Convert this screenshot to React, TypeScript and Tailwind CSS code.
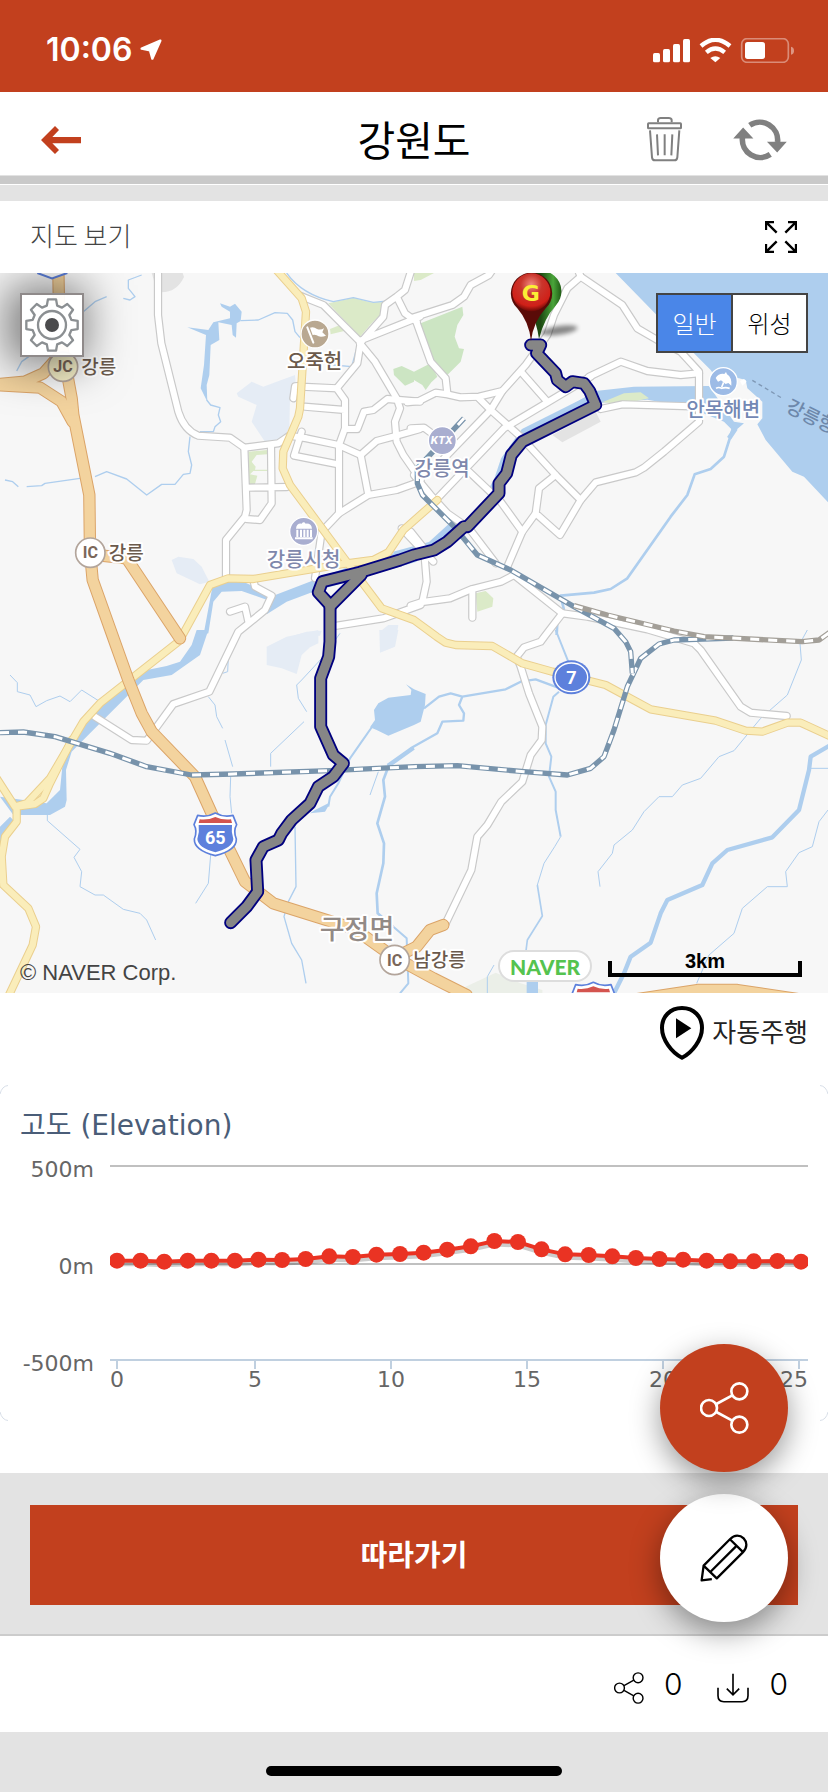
import React from "react";

type Quad = "nw" | "ne" | "sw" | "se";
type Line = [Quad, string];

// The map drawing is kept as four sheets that share one 2484x2160 canvas.
const SHEET: Record<Quad, string> = {
  nw: "translate(0 -24)",
  ne: "translate(1242 -24)",
  sw: "translate(0 1071)",
  se: "translate(1242 1071)",
};

const KR = "font-['Noto_Sans_CJK_KR',sans-serif]";

const areas: [Quad, string, string][] = [
  ["nw", "#e3e3e3", "M390 24 L455 24 L475 90 L485 82 Q530 82 552 36 L548 24Z"],
  ["nw", "#e5ecf5", "M710 385 L755 350 L790 365 L830 350 L885 330 L890 385 L870 400 L868 490 L850 520 L795 530 L755 470 L770 420 L715 395Z"],
  ["nw", "#e5ecf5", "M515 885 L535 875 L580 882 L605 905 L628 950 L600 958 L530 925Z"],
  ["nw", "#e5ecf5", "M880 1112 L920 1100 L965 1097 L960 1112Z M1140 1100 L1165 1080 L1195 1080 L1190 1112 L1140 1112Z"],
  ["sw", "#e5ecf5", "M800 50 L860 20 L955 0 L955 40 L930 52 L905 75 L890 132 L845 115 L800 105Z"],
  ["sw", "#e5ecf5", "M1138 0 L1195 0 L1185 50 L1140 68Z"],
  ["nw", "#dbeac8", "M985 115 L1060 98 L1110 112 L1148 112 L1140 150 L1110 180 L1080 215Z M990 192 L1020 180 L1045 195 L992 208Z"],
  ["nw", "#dbeac8", "M745 560 L802 555 V568 L770 570 L755 590 L767 605 L765 614 L802 614 V618 H760 L750 628 L772 632 L765 657 L748 657Z"],
  ["nw", "#cce5c3", "M1180 312 L1205 303 L1242 320 L1242 350 L1215 362 L1182 330Z"],
  ["ne", "#cce5c3", "M20 175 L145 125 L148 150 L130 180 L122 215 L135 250 L150 252 L140 290 L100 330 L75 320 L48 285Z"],
  ["ne", "#cce5c3", "M0 320 L50 295 L70 335 L52 352 L35 375 L25 360 L0 345Z"],
  ["ne", "#dbeac8", "M185 985 L215 978 L238 1000 L235 1025 L190 1040Z M0 24 L60 24 L20 45 L0 48Z"],
  ["se", "#ebefe8", "M155 1070 L245 1028 L320 1060 L385 1080 V1100 H155Z"],
  ["ne", "#aeceee", "M605 24 L845 270 L890 315 L900 330 L975 340 L995 345 L1000 370 L1045 410 L1045 460 L1030 478 L1055 525 L1135 620 L1170 635 L1245 715 V24Z"],
  ["ne", "#aeceee", "M430 445 L545 378 L660 365 L885 363 L960 470 L990 475 L960 500 L930 470 L820 425 L700 404 L540 415 L440 450Z"],
  ["ne", "#dbeac8", "M565 412 L630 385 L680 382 L705 400 L625 417Z"],
  ["ne", "#e3e3e3", "M415 510 L545 440 L560 470 L445 532Z"],
  ["nw", "#aeceee", "M660 115 L690 125 L705 116 L725 140 L722 168 L710 175 L708 218 L698 210 L695 180 L655 172 L658 225 L632 240 L628 330 L620 360 L622 410 L602 370 L612 300 L618 210 L562 187 L625 195 L640 172 L690 160 L690 140 L665 125Z"],
  ["nw", "#aeceee", "M1250 845 L1060 900 L820 992 L730 950 L640 950 L610 1112 H595 L625 1105 L640 1010 L665 980 L725 978 L810 1008 L800 1048 L860 1010 L940 980 L1250 890Z"],
  ["sw", "#aeceee", "M590 0 L575 45 L540 95 L500 108 L430 122 L280 235 L215 330 L190 380 L180 480 L140 520 L0 500 L40 555 L150 555 L195 530 L200 510 L198 420 L215 365 L270 310 L430 150 L515 135 L600 75 L625 0Z"],
  ["sw", "#aeceee", "M0 590 L30 560 L45 575 L20 600 L5 640 L0 640Z M985 520 L945 540 L930 550 L975 545 L990 520Z"],
  ["sw", "#aeceee", "M1110 292 L1125 270 L1122 240 L1135 220 L1165 203 L1232 195 L1234 180 L1218 163 L1242 178 L1277 192 L1275 225 L1262 275 L1242 285 L1165 317 L1130 300Z"],
];

const streams: [Quad, number, string][] = [
  ["nw", 4, "M860 24 Q905 88 1000 110 L1060 98 L1120 112 L1165 108 L1200 90"],
  ["nw", 4, "M320 95 L285 110 L250 140 M425 30 L385 45 L385 70 L405 95 L390 105 L370 100 M100 265 L65 290 L50 318"],
  ["nw", 4, "M722 167 L775 165 L825 143 L862 145 L878 165 L885 200 L900 218"],
  ["nw", 4, "M1000 300 L1055 305 L1070 250"],
  ["nw", 4, "M620 405 L632 420 L660 428 L655 450 L662 470 L645 485 L640 500 L600 500 M570 515 L565 560 L575 600 L570 625 L550 628 L525 658 L485 658 L440 690 L380 642 L320 620 L285 635"],
  ["nw", 4, "M240 640 L135 655 L125 662 L80 665 M15 645 L38 650 L55 665"],
  ["ne", 20, "M520 405 L330 500 L270 585 L250 645 L225 690"],
  ["ne", 20, "M110 785 L50 840 L-60 870"],
  ["ne", 14, "M965 490 L945 520"],
  ["ne", 8, "M960 480 L930 575 L890 612 L842 628 L820 690 L770 755 L640 940 L590 972 L540 983 L440 992 L450 1035 L430 1070 L428 1110"],
  ["se", 6, "M425 0 L465 100 M435 185 L418 200 L395 285 L395 340 L412 380 L405 440 L425 485 L425 540 L440 620"],
  ["se", 3, "M440 620 L422 650 L390 700 L370 765"],
  ["se", 5, "M370 765 L385 858 L340 930 L335 970"],
  ["se", 34, "M355 1030 V1100"],
  ["se", 7, "M30 235 L75 200 L110 190 L145 200 L275 178 L320 155 L365 148 L430 172 M145 200 L135 225 L150 250 L148 272 L85 275 L70 310 L-10 355 L-80 405"],
  ["se", 13, "M1250 345 L1190 380 L1185 420 L1155 540 L1075 622 L940 660 L895 700 L865 765 L760 810 L740 850 L710 938 L650 980 L630 1030 L600 1090"],
  ["se", 3, "M1190 415 H1242 M1242 540 L1215 575 L1195 650 L1155 668 L1115 725 L1120 770 L1060 770 L985 835 L960 910 L885 975 L848 1060"],
  ["se", 3, "M1180 0 L1158 40 L1162 90 L1120 195 L1040 265 L960 362 L915 380 L860 445 L805 465 L775 500 L735 500 L690 545 L655 600 L600 645 L595 670 L552 725 L558 770"],
  ["se", 3, "M220 1100 V1040 L240 1005"],
  ["sw", 8, "M1242 355 L1165 410 L1150 450 L1155 500 L1132 580 L1152 640 L1150 700 L1130 790 L1133 850 L1180 890"],
  ["sw", 6, "M1180 890 L1220 925 L1225 1060 L1200 1090 M1120 285 L1085 335 L1050 385 L1015 460 L990 500 L985 530"],
  ["sw", 3, "M30 135 L52 158 V185 L90 195 L108 230 L140 212 L180 198 L210 215 L245 180 L300 215 M142 550 V572 L240 658 L222 682 L245 725 L240 770 L285 795 L310 795 L370 838 L420 850 L440 870 L467 930"],
  ["sw", 3, "M625 200 L645 225 L650 260 L668 295 M675 330 L698 410 M692 440 L690 500 L695 550 M632 675 L625 760 L587 820 M1020 10 L970 80 L905 150 L890 165 L895 205 L920 245 M912 275 L812 370 V410 M685 80 L683 125 L668 130 M1135 425 L1110 495"],
  ["sw", 4, "M885 590 L888 770 L865 815 L852 860 L875 940 L905 990 L918 1060"],
];

const localRoads: Line[] = [
  ["nw", "M474 10 L474 150 L484 235 L535 440 Q552 495 595 512 L690 518 L733 548 L835 535 L868 512 L920 520 L1015 540 L1082 570 L1130 528 L1190 512 L1260 492"],
  ["nw", "M733 548 L740 735 L735 755 L678 825 L678 940 M813 545 L815 715 L780 765 L740 762 M740 668 L860 666"],
  ["nw", "M905 365 L1010 370 L1035 405 L1035 490 L1017 540 L1017 745 L965 800 L945 940 M905 500 L882 572 L1015 598 M915 425 L1035 435 M905 362 L885 364 L880 400"],
  ["nw", "M1035 492 L1072 492 L1092 440 L1120 435 L1162 402 L1260 410 M1010 370 L1072 295 L1082 232 L970 120 L900 92"],
  ["nw", "M1080 235 L1150 155 L1155 120 L1190 95 L1215 75 L1242 -10 M1190 95 L1215 145 L1250 170 M1085 225 L1260 155"],
  ["nw", "M1080 235 L1125 290 L1190 400 L1200 430 L1185 470 L1190 530 L1210 570 L1262 645 M1082 570 L1105 690 M1017 745 L1105 690 L1190 675 L1260 650 M1205 790 L1300 890"],
  ["nw", "M690 1040 L735 1025 L745 1070 M760 945 L765 965 L815 992 L795 1035 L740 1080 L715 1100 L628 1280 L520 1317 L440 1427 L395 1425 L285 1355 M1010 1082 L1150 1060 L1262 1020"],
  ["ne", "M-10 160 L115 120 L150 95 L170 60 L225 30 L245 0 M5 165 L50 290 L95 340 L100 385"],
  ["ne", "M-20 412 L15 408 L65 383 L100 388 L140 397 L195 395 L265 378 L335 300 L400 210 L420 150 L460 70 L500 35"],
  ["ne", "M490 10 L500 35 L625 120 L670 190 L730 225 L800 260 L855 320 L855 470 L750 560 L690 608 L665 622 L545 652 L500 705 L438 810 L365 745 L375 670 L425 630"],
  ["ne", "M265 378 L230 435 L195 400 M230 435 L320 515 L425 630 L500 705 M325 325 L400 410 M525 335 L620 290 L700 318 L800 330 L855 325 M560 432 L625 418 L830 424"],
  ["ne", "M530 335 L270 490 L70 700 M230 435 L90 580 M165 620 L260 710 L325 800 M-10 490 L30 488 L60 510 M0 630 L50 690 L100 745 L165 790 L245 895"],
  ["ne", "M365 745 L325 800 L280 905 M-10 1022 L20 1012 L108 1000 L172 973 L262 950 L300 930 L445 1045 L395 1110 L380 1130 L330 1147 L308 1175 L320 1205 L345 1285 L385 1385 L383 1425 L350 1470 L325 1550 L262 1610 L220 1680 L190 1715 L172 1815 L95 1975"],
  ["ne", "M445 1045 L520 1055 L700 1093 L840 1135 L860 1155 L980 1325 L1010 1343 L1118 1353 M175 973 L175 1058 M-10 800 L30 850 L38 950 L25 1010"],
];

const mainRoads: Line[] = [
  ["nw", "M825 10 L905 100 L918 140 L900 430 L895 455 L850 560 L848 610 L870 660 L1040 890 L1145 1030 L1242 1065 L1310 1115 L1337 1133 L1367 1140 L1477 1143 L1567 1195 L1657 1220 L1817 1260 L1952 1333 L2147 1367 L2237 1397 L2287 1400 L2362 1373 L2402 1373 L2500 1418"],
  ["nw", "M1312 705 L1210 795 L1165 862 L1120 885 L1040 895 L760 942 L685 940 L630 960 L545 1115 L535 1130 L300 1315 L250 1370 L150 1540 L80 1615 L45 1625 L-10 1540"],
  ["sw", "M215 330 L150 460 L130 505 L105 522 L50 530 L50 575 L15 620 L5 680 L10 765 L85 835 L108 890 L98 945 L20 1110"],
];

const highways: Line[] = [
  ["nw", "M175 10 L178 200 L215 400 L220 450 L268 690 L270 860 L278 945 L335 1105 L385 1245 L425 1345 L455 1400 L585 1535 L635 1645 L735 1850 L820 1915 L1060 1990 L1180 2075 L1300 2140 L1400 2190"],
  ["nw", "M-10 358 L75 350 L130 325 L175 275 M-10 360 L120 368 L185 410 L218 470 M290 870 L380 880 L540 1120"],
  ["sw", "M1180 985 L1250 950 L1290 900 L1330 885"],
  ["se", "M600 1118 L850 1080 L970 1080 L1170 1110"],
];

const rails: [Quad, string, string][] = [
  ["sw", "#7893ab", "M0 308 L70 306 L165 320 L330 370 L440 410 L575 435 L700 432 L990 422 L1242 410 L1372 407 L1572 425 L1702 435 L1772 415 L1812 380 L1842 300 L1882 170 L1922 85 L1977 42 L2022 30 L2200 24"],
  ["ne", "#7893ab", "M150 460 L85 530 L10 610 L10 655 L25 690 L120 785 L190 870 L290 915 L480 1025 L600 1090 L635 1130 L650 1160 L655 1225"],
  ["ne", "#a39f98", "M480 1022 L580 1050 L780 1098 L870 1115 L1165 1130 L1215 1125 L1250 1100"],
];

const route: Line[] = [
  ["ne", "M350 240 L380 240 L368 265 L425 325 L430 345 L455 365 L475 350 L510 355 L527 378 L545 420 L325 530 L292 570 L278 625 L255 655 L255 685 L160 785 L150 785 L100 830 L60 855 L0 870 L-42 885 L-162 922 L-275 950 L-287 982 L-252 1020 L-252 1110 L-252 1130 L-256 1175 L-280 1240 L-280 1385 L-242 1470 L-212 1495 L-242 1535 L-287 1565 L-312 1615 L-367 1665 L-397 1705 L-407 1725 L-452 1745 L-474 1785 L-469 1880 L-502 1925 L-550 1973"],
  ["ne", "M-158 930 L-252 1024"],
];

function Lines({ lines, casing, fill, outer, inner }: { lines: Line[]; casing: string; fill: string; outer: number; inner: number }) {
  return (
    <g fill="none" strokeLinejoin="round" strokeLinecap="round">
      {lines.map(([q, d], i) => (
        <path key={"o" + i} transform={SHEET[q]} d={d} stroke={casing} strokeWidth={outer} />
      ))}
      {lines.map(([q, d], i) => (
        <path key={"i" + i} transform={SHEET[q]} d={d} stroke={fill} strokeWidth={inner} />
      ))}
    </g>
  );
}

function Label({ x, y, size, color, anchor = "middle", children }: { x: number; y: number; size: number; color: string; anchor?: "middle" | "start"; children: string }) {
  return (
    <text x={x} y={y} fontSize={size} fill={color} textAnchor={anchor} stroke="#ffffff" strokeWidth={12} strokeLinejoin="round" paintOrder="stroke" className={`${KR} font-medium`}>
      {children}
    </text>
  );
}

function Junction({ x, y, text, fill = "#ffffff" }: { x: number; y: number; text: string; fill?: string }) {
  return (
    <g>
      <circle cx={x} cy={y} r={44} fill={fill} stroke="#b3a59b" strokeWidth={5} />
      <text x={x} y={y + 17} fontSize={48} fill="#7a675a" textAnchor="middle" className="font-['Roboto',sans-serif] font-bold">{text}</text>
    </g>
  );
}

function Shield({ x, y, text }: { x: number; y: number; text?: string }) {
  return (
    <g transform={`translate(${x} ${y})`}>
      <path d="M-53 -57 Q-25 -50 0 -64 Q25 -50 53 -57 L64 -29 Q53 -10 63 14 Q64 48 0 64 Q-64 48 -63 14 Q-53 -10 -64 -29Z" fill="#fff" stroke="#5d80dc" strokeWidth="5" strokeLinejoin="round" />
      <path d="M-50 -28 H50 Q47 -8 54 14 Q52 40 0 54 Q-52 40 -54 14 Q-47 -8 -50 -28Z" fill="#5d80dc" />
      <path d="M-50 -34 L-47 -45 Q-22 -42 0 -52 Q22 -42 47 -45 L50 -34Z" fill="#d4544f" />
      {text && (
        <text x="0" y="30" fontSize="54" fill="#fff" textAnchor="middle" className="font-['Roboto',sans-serif] font-bold">{text}</text>
      )}
    </g>
  );
}

function MapDrawing() {
  return (
    <svg viewBox="0 0 2484 2160" preserveAspectRatio="xMidYMid slice" className="block h-full w-full bg-[#f7f7f7]" role="img" aria-label="강원도 지도">
      <defs>
        <radialGradient id="pinRed" cx="50%" cy="30%" r="70%">
          <stop offset="0" stopColor="#f08a80" />
          <stop offset="0.4" stopColor="#c9352c" />
          <stop offset="0.8" stopColor="#d02018" />
          <stop offset="1" stopColor="#6b0a06" />
        </radialGradient>
        <linearGradient id="pinGreen" x1="0" x2="1">
          <stop offset="0.5" stopColor="#1d4a12" />
          <stop offset="0.8" stopColor="#4aa53a" />
          <stop offset="1" stopColor="#1f5a14" />
        </linearGradient>
        <filter id="soft" x="-30%" y="-80%" width="160%" height="260%">
          <feGaussianBlur stdDeviation="6" />
        </filter>
      </defs>

      {areas.map(([q, fill, d], i) => (
        <path key={i} transform={SHEET[q]} d={d} fill={fill} />
      ))}
      {streams.map(([q, w, d], i) => (
        <path key={i} transform={SHEET[q]} d={d} fill="none" stroke="#aeceee" strokeWidth={w} strokeLinejoin="round" />
      ))}
      <Lines lines={localRoads} casing="#c9c9c9" fill="#ffffff" outer={25} inner={18} />
      <Lines lines={mainRoads} casing="#eacf8e" fill="#faedba" outer={25} inner={19} />
      <Lines lines={highways} casing="#dba468" fill="#f3d39e" outer={37} inner={31} />
      {rails.map(([q, color, d], i) => (
        <g key={i} transform={SHEET[q]} fill="none" strokeLinejoin="round">
          <path d={d} stroke={color} strokeWidth="16" />
          <path d={d} stroke="#ffffff" strokeWidth="9" strokeDasharray="27 27" />
        </g>
      ))}

      <g transform={SHEET.nw}>
        <path d="M112 24 L156 40 L202 24" fill="#fff" stroke="#5d80dc" strokeWidth="6" />
        <circle cx="945" cy="207" r="42" fill="#b9a891" stroke="#fff" strokeWidth="4" />
        <path d="M922 187 L940 233" stroke="#fff" strokeWidth="6" strokeLinecap="round" />
        <path d="M930 188 Q941 184 951 192 Q962 196 972 190 L967 202 L978 212 Q960 219 950 211 Q944 208 938 210Z" fill="#fff" />
        <Label x={944} y={313} size={60} color="#6b5a4c">오죽헌</Label>
        <Junction x={189} y={305} text="JC" fill="#f6f0c8" />
        <Label x={244} y={327} size={57} color="#6b5a4c" anchor="start">강릉</Label>
        <Junction x={271} y={863} text="IC" />
        <Label x={326} y={885} size={57} color="#6b5a4c" anchor="start">강릉</Label>
        <circle cx="911" cy="799" r="42" fill="#a9aed0" stroke="#fff" strokeWidth="4" />
        <path d="M888 791 Q890 774 905 776 Q911 768 917 776 Q934 774 936 791Z M889 794 h6 v22 h-6z M900 794 h6 v22 h-6z M910 794 h6 v22 h-6z M920 794 h6 v22 h-6z M930 794 h6 v22 h-6z M885 817 h53 v6 h-53z" fill="#fff" />
        <Label x={911} y={906} size={60} color="#7f88ac">강릉시청</Label>
      </g>
      <g transform={SHEET.ne}>
        <circle cx="85" cy="527" r="42" fill="#a9aed0" stroke="#fff" strokeWidth="4" />
        <text x="83" y="538" fontSize="30" fill="#fff" textAnchor="middle" className="font-['Inter',sans-serif] font-extrabold italic">KTX</text>
        <Label x={84} y={633} size={60} color="#7f88ac">강릉역</Label>
        <circle cx="928" cy="350" r="42" fill="#9dbbe6" stroke="#fff" strokeWidth="4" />
        <path d="M905 339 Q915 324 931 327 L936 321 L939 328 Q954 337 952 362 L943 354 L935 357 L921 346 L912 350Z" fill="#fff" />
        <path d="M929 352 L923 366 M906 370 Q914 365 923 370 Q934 366 947 370" fill="none" stroke="#fff" strokeWidth="5" />
        <Label x={928} y={456} size={60} color="#7388b4">안목해변</Label>
        <path d="M1015 346 L1108 402" stroke="#7f98b5" strokeWidth="4" strokeDasharray="12 10" fill="none" />
        <path d="M978 348 L990 342 L998 350 L985 362Z" fill="#fff" />
        <text transform="translate(1112 438) rotate(26)" fontSize="57" fill="#6d88ab" className={`${KR} font-medium`}>강릉항</text>
      </g>
      <g transform={SHEET.sw}>
        <Shield x={646} y={613} text="65" />
        <Label x={1071} y={926} size={81} color="#928a86">구정면</Label>
        <Junction x={1184} y={990} text="IC" />
      </g>
      <g transform={SHEET.se}>
        <ellipse cx="472" cy="142" rx="57" ry="51" fill="#5d80dc" />
        <ellipse cx="472" cy="142" rx="49" ry="43" fill="none" stroke="#fff" strokeWidth="4" />
        <text x="472" y="161" fontSize="54" fill="#fff" textAnchor="middle" className="font-['Roboto',sans-serif] font-bold">7</text>
        <Shield x={538} y={1121} />
        <Label x={-2} y={1012} size={57} color="#6b5a4c" anchor="start">남강릉</Label>
      </g>

      <Lines lines={route} casing="#00007f" fill="#868686" outer={39} inner={28} />

      <g transform={SHEET.ne}>
        <ellipse cx="435" cy="196" rx="56" ry="13" transform="rotate(-8 435 196)" fill="#000" opacity="0.45" filter="url(#soft)" />
        <path d="M375 222 Q368 170 345 130 A62 62 0 1 1 425 122 Q390 160 375 222Z" fill="url(#pinGreen)" />
        <path d="M351 228 Q345 170 310 130 A62 62 0 1 1 395 130 Q358 170 351 228Z" fill="#5a0b08" />
        <circle cx="352" cy="82" r="57" fill="url(#pinRed)" />
        <text x="350" y="107" fontSize="66" fill="#fbee35" textAnchor="middle" className="font-['DejaVu_Sans',sans-serif] font-bold">G</text>
      </g>
    </svg>
  );
}

// Outline of an eight-toothed cog centred on the origin.
function cogPath() {
  const pts: string[] = [];
  for (let i = 0; i < 8; i++) {
    for (const [r, off] of [[60, -15], [78, -9], [78, 9], [60, 15]]) {
      const a = ((i * 45 + off) * Math.PI) / 180;
      pts.push(`${(r * Math.sin(a)).toFixed(1)} ${(-r * Math.cos(a)).toFixed(1)}`);
    }
  }
  return "M" + pts.join(" L") + "Z";
}

function ShareIcon({ className, width }: { className: string; width: number }) {
  return (
    <svg viewBox="857 216 147 156" className={className} fill="none" stroke="currentColor" strokeWidth={width} aria-hidden="true">
      <circle cx="975" cy="244" r="24" />
      <circle cx="884" cy="294" r="24" />
      <circle cx="975" cy="344" r="24" />
      <path d="M906 282 L954 256 M906 306 L954 332" />
    </svg>
  );
}

const heights = [812, 812, 815, 812, 812, 812, 809, 810, 807, 799, 801, 794, 792, 788, 779, 769, 753, 756, 778, 793, 795, 799, 804, 807, 809, 812, 814, 814, 813, 815];
const points = heights.map((h, i) => [117 + (i * 684) / 29, h / 3 - 95]);
const ticks: [string, number][] = [["0", 117], ["5", 255], ["10", 391], ["15", 527], ["20", 663], ["25", 799]];

function ElevationChart() {
  return (
    <svg viewBox="0 0 828 336" className="block w-full" role="img" aria-label="고도 그래프">
      <defs>
        <clipPath id="plot"><rect x="110" y="60" width="698" height="230" /></clipPath>
      </defs>
      <g fill="none" stroke="#d8dfe8" strokeWidth="1">
        <path d="M0 9 Q2 1 8 0.5 M820 0.5 Q826 1 828 9 M0 327 Q2 335 8 335.5 M820 335.5 Q826 335 828 327" />
      </g>
      <text x="20" y="50" fontSize="28" fill="#4a5d78" className="font-['DejaVu_Sans','Noto_Sans_CJK_KR',sans-serif]">고도 (Elevation)</text>
      <path d="M110 81 H808 M110 179 H808" stroke="#c0c0c0" strokeWidth="2" />
      <path d="M110 275 H808" stroke="#c0d0e0" strokeWidth="2" />
      {ticks.map(([, x]) => <path key={x} d={`M${x} 276 v8`} stroke="#c0d0e0" strokeWidth="2" />)}
      <g fontSize="22" fill="#666666" className="font-['DejaVu_Sans',sans-serif]">
        <text x="94" y="92" textAnchor="end">500m</text>
        <text x="94" y="189" textAnchor="end">0m</text>
        <text x="94" y="286" textAnchor="end">-500m</text>
        {ticks.map(([t, x]) => (
          <text key={t} x={t === "25" ? 808 : x} y="302" textAnchor={t === "25" ? "end" : "middle"}>{t}</text>
        ))}
      </g>
      <g clipPath="url(#plot)">
        <polyline points={points.map(([x, y]) => `${x},${y + 3}`).join(" ")} fill="none" stroke="#000" strokeOpacity="0.2" strokeWidth="5" />
        <polyline points={points.map((p) => p.join(",")).join(" ")} fill="none" stroke="#ea3323" strokeWidth="4" />
        {points.map(([x, y], i) => <circle key={i} cx={x} cy={y} r="8" fill="#ea3323" />)}
      </g>
    </svg>
  );
}

export default function App() {
  return (
    <div className={`relative min-h-screen bg-[#e3e3e3] text-black ${KR}`}>
      <div className="flex h-[92px] items-center justify-between bg-[#c2401e] pr-[34px] pl-[46px] pt-2">
        <div className="flex items-center gap-2 text-white">
          <span className="font-['Inter',sans-serif] text-[32px] leading-10 font-semibold">10:06</span>
          <svg viewBox="416 117 66 66" className="size-[22px]" aria-hidden="true">
            <path d="M477 122 L421 146 L446 151 L453 176Z" fill="#fff" stroke="#fff" strokeWidth="7" strokeLinejoin="round" />
          </svg>
        </div>
        <svg viewBox="717 111 423 75" className="h-[25px] w-[141px]" aria-hidden="true">
          <g fill="#fff">
            <rect x="717" y="156" width="21" height="28" rx="5" />
            <rect x="747" y="144" width="21" height="40" rx="5" />
            <rect x="777" y="129" width="21" height="55" rx="5" />
            <rect x="807" y="114" width="21" height="70" rx="5" />
            <path d="M889 171 Q904 160 919 171 L904 184Z" />
          </g>
          <path d="M861 135 Q904 98 948 135 M877 154 Q904 131 932 154" fill="none" stroke="#fff" strokeWidth="13" />
          <rect x="983" y="113" width="140" height="71" rx="16" fill="none" stroke="#fff" strokeOpacity="0.4" strokeWidth="5" />
          <rect x="993" y="123" width="60" height="51" rx="8" fill="#fff" />
          <path d="M1131 137 Q1140 139 1140 149 Q1140 159 1131 161Z" fill="#fff" fillOpacity="0.45" />
        </svg>
      </div>

      <header className="grid h-[84px] grid-cols-[1fr_auto_1fr] items-center border-b border-[#e2e2e2] bg-white px-[41px] pt-3">
        <button type="button" aria-label="뒤로" className="justify-self-start">
          <svg viewBox="123 378 120 84" className="h-7 w-10" aria-hidden="true">
            <path d="M123 420 L165 378 L177 390 L157 411 H243 V430 H157 L177 450 L165 462Z" fill="#c2401e" />
          </svg>
        </button>
        <h1 className="pb-1 text-[41px] leading-[60px] font-normal">강원도</h1>
        <div className="flex items-center justify-end gap-[51px] text-[#808080]">
          <button type="button" aria-label="삭제">
            <svg viewBox="699 353 105 135" className="h-[45px] w-[35px]" fill="none" stroke="currentColor" strokeWidth="6" aria-hidden="true">
              <path d="M732 369 V362 Q733 356 740 356 H764 Q772 356 773 362 V369" />
              <rect x="702" y="372" width="99" height="15" rx="2" />
              <path d="M708 393 L714 474 Q715 483 723 483 H781 Q789 483 790 474 L796 393 M729 405 L732 468 M752 405 V468 M775 405 L772 468" />
            </svg>
          </button>
          <button type="button" aria-label="새로고침">
            <svg viewBox="957 357 162 127" className="h-[42px] w-[54px]" aria-hidden="true">
              <path d="M1007 376 A54 54 0 0 1 1091 427 M1069 464 A54 54 0 0 1 985 413" fill="none" stroke="currentColor" strokeWidth="17" />
              <path d="M1059 426 H1119 L1090 458Z M957 416 H1018 L987 383Z" fill="currentColor" />
            </svg>
          </button>
        </div>
      </header>
      <div className="h-[9px] border-b border-white bg-[#c9c9c9]" />

      <section className="mt-4">
        <div className="flex h-[72px] items-center justify-between bg-white pr-[31px] pl-[30px]">
          <h2 className="pb-1 text-[26px] leading-10 font-light text-[#444]">지도 보기</h2>
          <button type="button" aria-label="전체 화면">
            <svg viewBox="1050 663 96 96" className="size-8" fill="none" stroke="#000" strokeWidth="7" aria-hidden="true">
              <path d="M1053 690 V666 H1077 M1054 667 L1085 698 M1119 666 H1143 V690 M1142 667 L1111 698 M1053 732 V756 H1077 M1054 755 L1085 724 M1119 756 H1143 V732 M1142 755 L1111 724" />
            </svg>
          </button>
        </div>

        <div className="relative h-[720px] overflow-hidden">
          <MapDrawing />
          <button type="button" aria-label="설정" className="absolute top-5 left-5 size-16 border-2 border-[#8f8a8a] bg-white/95 shadow-[-6px_0_44px_8px_rgba(0,0,0,0.5)]">
            <svg viewBox="-90 -90 180 180" className="size-full" aria-hidden="true">
              <path d={cogPath()} fill="#fff" stroke="#8b8f92" strokeWidth="7" strokeLinejoin="round" />
              <circle r="42" fill="#fff" stroke="#8b8f92" strokeWidth="7" />
              <circle r="21" fill="#4b4b4d" />
            </svg>
          </button>
          <div className="absolute top-5 right-5 flex h-[60px] w-[152px] border-2 border-[#444] text-[24px] font-light">
            <button type="button" aria-pressed="true" className="flex-1 border-r-2 border-[#444] bg-[#4a86e8] text-white">일반</button>
            <button type="button" aria-pressed="false" className="flex-1 bg-white">위성</button>
          </div>
          <span className="absolute bottom-1 left-5 font-['Liberation_Sans',sans-serif] text-[22px] leading-8 text-[#444]">© NAVER Corp.</span>
          <span className="absolute right-[236px] bottom-[11px] flex h-8 w-[94px] items-center justify-center rounded-full border-2 border-[#ddd] bg-white font-['Lato',sans-serif] text-[21px] leading-none font-black text-[#55c34f]">NAVER</span>
          <div className="absolute right-[26px] bottom-4 flex h-4 w-[194px] items-end justify-center border-4 border-t-0 border-black">
            <span className="font-['Liberation_Sans',sans-serif] text-[20px] leading-6 font-bold">3km</span>
          </div>
        </div>
      </section>

      <section className="bg-white pb-[52px]">
        <div className="flex h-[92px] items-center justify-end pr-5 pb-3">
          <button type="button" className="flex items-center gap-2 text-[26px] leading-10 text-[#222]">
            <svg viewBox="735 48 132 162" className="h-[54px] w-11" aria-hidden="true">
              <path d="M801 54 C765 54 741 80 741 114 C741 148 769 187 801 203 C833 187 861 148 861 114 C861 80 837 54 801 54Z" fill="none" stroke="#000" strokeWidth="12" strokeLinejoin="round" />
              <path d="M783 85 L829 115 L783 145Z" />
            </svg>
            <span className="pb-1">자동주행</span>
          </button>
        </div>
        <ElevationChart />
      </section>

      <div className="border-b-2 border-[#ccc] px-[30px] pt-8 pb-[29px]">
        <button type="button" className="h-[100px] w-full bg-[#c2401e] pb-1 text-[29px] leading-10 font-bold text-white">따라가기</button>
      </div>

      <footer>
        <div className="flex h-24 items-center justify-end bg-white pr-10 text-[30px] leading-10">
          <span className="flex items-center gap-5">
            <ShareIcon className="mt-2 h-8 w-[30px]" width={7} />
            <span className="font-['Inter',sans-serif] font-light">0</span>
          </span>
          <span className="ml-[35px] flex items-center gap-5">
            <svg viewBox="905 1088 98 92" className="mt-2 h-[30px] w-8" fill="none" stroke="#000" strokeWidth="5" aria-hidden="true">
              <path d="M908 1133 V1158 Q908 1176 926 1176 H982 Q1000 1176 1000 1158 V1133 M954 1090 V1155 M935 1136 L954 1155 L973 1136" />
            </svg>
            <span className="font-['Inter',sans-serif] font-light">0</span>
          </span>
        </div>
        <div className="flex h-[60px] items-end justify-center pb-4">
          <div className="h-[10px] w-[296px] rounded-full bg-black" />
        </div>
      </footer>

      <div className="absolute right-10 bottom-[170px] flex flex-col gap-[22px]">
        <button type="button" aria-label="공유" className="relative z-10 flex size-32 items-center justify-center rounded-full bg-[#c2401e] text-white shadow-[0_10px_30px_rgba(0,0,0,0.4)]">
          <ShareIcon className="h-[52px] w-[49px]" width={8} />
        </button>
        <button type="button" aria-label="편집" className="flex size-32 items-center justify-center rounded-full bg-white shadow-[0_10px_30px_rgba(0,0,0,0.4)]">
          <svg viewBox="857 671 146 146" className="size-12" fill="none" stroke="#000" strokeWidth="7" strokeLinejoin="round" aria-hidden="true">
            <path d="M868 767 L948 687 Q959 676 970 676 A28 28 0 0 1 998 704 Q998 716 988 726 L908 806Z M948 687 L988 726 M968 707 L889 786 M868 767 L862 812 L893 808" />
          </svg>
        </button>
      </div>
    </div>
  );
}
